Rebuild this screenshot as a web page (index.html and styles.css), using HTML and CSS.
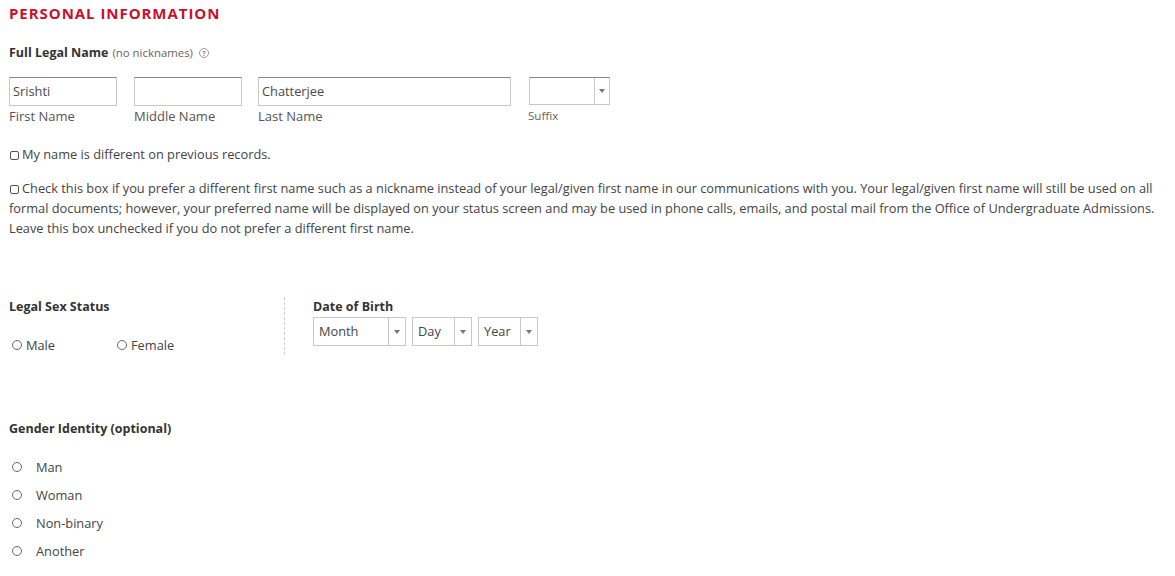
FILE: index.html
```html
<!DOCTYPE html>
<html lang="en">
<head>
<meta charset="utf-8">
<title>Personal Information</title>
<link rel="stylesheet" href="styles.css">
</head>
<body>
<main class="page">
  <h1 class="title">PERSONAL INFORMATION</h1>

  <div class="field-heading">
    <span class="strong">Full Legal Name</span> <span class="hint">(no nicknames)</span>
    <span class="help">?</span>
  </div>

  <div class="name-row">
    <div class="name-col first">
      <div class="text-input">Srishti</div>
      <div class="sub-label">First Name</div>
    </div>
    <div class="name-col middle">
      <div class="text-input"></div>
      <div class="sub-label">Middle Name</div>
    </div>
    <div class="name-col last">
      <div class="text-input">Chatterjee</div>
      <div class="sub-label">Last Name</div>
    </div>
    <div class="name-col suffix">
      <div class="select select-suffix"><span class="select-value"></span><span class="select-arrow"></span></div>
      <div class="sub-label small">Suffix</div>
    </div>
  </div>

  <div class="check-line"><span class="checkbox"></span>My name is different on previous records.</div>

  <p class="check-para"><span class="checkbox"></span>Check this box if you prefer a different first name such as a nickname instead of your legal/given first name in our communications with you. Your legal/given first name will still be used on all formal documents; however, your preferred name will be displayed on your status screen and may be used in phone calls, emails, and postal mail from the Office of Undergraduate Admissions. Leave this box unchecked if you do not prefer a different first name.</p>

  <div class="split-row">
    <section class="sex-col">
      <div class="strong heading">Legal Sex Status</div>
      <div class="radio-row">
        <label class="radio-inline male"><span class="radio"></span>Male</label>
        <label class="radio-inline"><span class="radio"></span>Female</label>
      </div>
    </section>
    <section class="dob-col">
      <div class="strong heading">Date of Birth</div>
      <div class="dob-selects">
        <div class="select select-month"><span class="select-value">Month</span><span class="select-arrow"></span></div>
        <div class="select select-day"><span class="select-value">Day</span><span class="select-arrow"></span></div>
        <div class="select select-year"><span class="select-value">Year</span><span class="select-arrow"></span></div>
      </div>
    </section>
  </div>

  <section class="gender">
    <div class="strong heading">Gender Identity (optional)</div>
    <ul class="radio-list">
      <li><span class="radio"></span>Man</li>
      <li><span class="radio"></span>Woman</li>
      <li><span class="radio"></span>Non-binary</li>
      <li><span class="radio"></span>Another</li>
    </ul>
  </section>
</main>
</body>
</html>
```

FILE: styles.css
```css
* { box-sizing: border-box; }

body {
  margin: 0;
  background: #ffffff;
  font-family: "Open Sans", "Noto Sans", Arial, sans-serif;
  font-size: 12.8px;
  color: #444444;
}

.page {
  padding: 3px 9px 0 9px;
}

.title {
  margin: 0;
  font-size: 15px;
  line-height: 20px;
  font-weight: 700;
  letter-spacing: 0.95px;
  color: #c8102e;
}

.strong {
  font-weight: 700;
  color: #333333;
  font-size: 12.5px;
}

.field-heading {
  margin-top: 20px;
  line-height: 20px;
  display: flex;
  align-items: center;
}

.hint {
  font-size: 11.4px;
  color: #666666;
  margin-left: 4px;
}

.help {
  display: inline-flex;
  align-items: center;
  justify-content: center;
  width: 10px;
  height: 10px;
  margin-left: 6px;
  border: 1px solid #999999;
  border-radius: 50%;
  font-size: 7px;
  line-height: 1;
  color: #888888;
  font-weight: 700;
}

.name-row {
  margin-top: 14px;
  display: flex;
}

.name-col.first { width: 108px; margin-right: 17px; }
.name-col.middle { width: 108px; margin-right: 16px; }
.name-col.last { width: 253px; margin-right: 18px; }
.name-col.suffix { width: 81px; }

.text-input {
  height: 29px;
  border: 1px solid #c8c8c8;
  border-top-color: #8a8a8a;
  padding: 0 3px;
  line-height: 27px;
  font-size: 12.8px;
  color: #4a4a4a;
}

.sub-label {
  line-height: 20px;
  color: #555555;
  font-size: 13px;
}

.sub-label.small {
  font-size: 11.6px;
  color: #666666;
  margin-left: -1px;
  padding-top: 1px;
}

.select {
  display: flex;
  height: 29px;
  border: 1px solid #c8c8c8;
}

.select-suffix {
  height: 28px;
  border-top-color: #8a8a8a;
}

.select-value {
  flex: 1;
  padding: 0 5px;
  line-height: 27px;
  font-size: 12.8px;
  color: #444444;
}

.select-arrow {
  position: relative;
  width: 17px;
  border-left: 1px solid #c8c8c8;
}

.select-suffix .select-arrow { width: 15px; }

.select-arrow::after {
  content: "";
  position: absolute;
  left: 50%;
  top: 50%;
  margin-left: -3px;
  margin-top: -2px;
  border-left: 3px solid transparent;
  border-right: 3px solid transparent;
  border-top: 4px solid #777777;
}

.checkbox {
  display: inline-block;
  width: 9px;
  height: 9px;
  border: 1px solid #555555;
  border-radius: 2px;
  margin-right: 3px;
  margin-left: 1px;
  vertical-align: -1px;
}

.check-line {
  margin-top: 18px;
  line-height: 20px;
}

.check-para {
  margin: 14px 0 0 0;
  line-height: 20px;
}

.split-row {
  margin-top: 59px;
  display: flex;
}

.sex-col {
  width: 276px;
  border-right: 1px dashed #d0d0d0;
}

.heading {
  line-height: 20px;
}

.radio-row {
  margin-top: 18px;
  display: flex;
  line-height: 20px;
}

.radio-inline {
  display: flex;
  align-items: center;
}

.radio-inline.male { width: 108px; padding-left: 3px; }

.radio {
  display: inline-block;
  width: 10px;
  height: 10px;
  border: 1px solid #666666;
  border-radius: 50%;
  margin-right: 4px;
}

.dob-col {
  padding-left: 28px;
}

.dob-selects {
  display: flex;
  gap: 6px;
}

.select-month { width: 93px; }
.select-day { width: 60px; }
.select-year { width: 60px; }

.gender {
  margin-top: 64px;
}

.radio-list {
  list-style: none;
  margin: 14px 0 0 0;
  padding: 0;
}

.radio-list li {
  display: flex;
  align-items: center;
  height: 28px;
  padding-left: 3px;
}

.radio-list .radio {
  margin-right: 14px;
}
```
